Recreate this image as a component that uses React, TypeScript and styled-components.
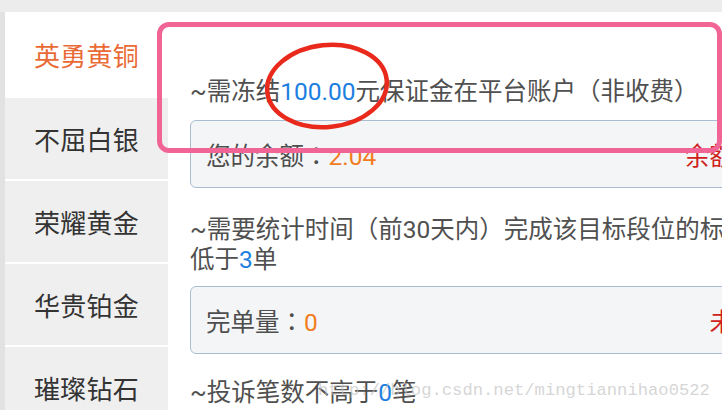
import styled, { createGlobalStyle } from 'styled-components';

type Rank = { name: string };

const ranks: Rank[] = [
  { name: '英勇黄铜' },
  { name: '不屈白银' },
  { name: '荣耀黄金' },
  { name: '华贵铂金' },
  { name: '璀璨钻石' },
];

const GlobalStyle = createGlobalStyle`
  html, body {
    margin: 0;
    padding: 0;
    background: #ffffff;
    overflow: hidden;
  }
  body {
    font-family: Roboto, "Noto Sans CJK SC", sans-serif;
  }
`;

const App = () => {
  const active = 0;

  return (
    <Page>
      <GlobalStyle />
      <TopBand />
      <Main>
        <Sidebar>
          {ranks.map((rank, i) => (
            <RankItem key={rank.name} active={i === active} first={i === 0}>
              {rank.name}
            </RankItem>
          ))}
        </Sidebar>
        <Content>
          <Desc>
            ~需冻结<Blue>100.00</Blue>元保证金在平台账户（非收费）
          </Desc>
          <InfoBox>
            <Label>
              您的余额<Colon>：</Colon>
              <Value>2.04</Value>
            </Label>
            <Status>余额不足</Status>
          </InfoBox>
          <Desc gap={27}>
            ~需要统计时间（前30天内）完成该目标段位的标准单量不
            <br />
            低于<Blue>3</Blue>单
          </Desc>
          <InfoBox tight>
            <Label>
              完单量<Colon>：</Colon>
              <Value>0</Value>
            </Label>
            <Status>未达标</Status>
          </InfoBox>
          <Desc gap={24}>
            ~投诉笔数不高于<Blue>0</Blue>笔
          </Desc>
        </Content>
      </Main>

      {/* hand-drawn annotations over the screenshot */}
      <Highlight />
      <Circle width="130" height="92" viewBox="0 0 130 92">
        <ellipse
          cx="65"
          cy="46"
          rx="60"
          ry="41"
          fill="none"
          stroke="#e8291c"
          strokeWidth="4.5"
          transform="rotate(-6 65 46)"
        />
      </Circle>
      <Watermark>http://blog.csdn.net/mingtiannihao0522</Watermark>
    </Page>
  );
};

const Page = styled.div`
  position: relative;
  width: 722px;
  height: 410px;
  overflow: hidden;
  background: #ffffff;
`;

const TopBand = styled.div`
  height: 12px;
  background: #ececec;
`;

const Main = styled.div`
  display: flex;
  align-items: flex-start;
`;

const Sidebar = styled.div`
  flex: 0 0 163px;
  display: flex;
  flex-direction: column;
  gap: 2px;
  border-left: 5px solid #e2e2e2;
  background: #ffffff;
  height: 398px;
`;

const RankItem = styled.div<{ active?: boolean; first?: boolean }>`
  height: ${({ first }) => (first ? '84px' : '81px')};
  flex: none;
  display: flex;
  align-items: center;
  justify-content: center;
  font-family: "Noto Sans CJK SC", sans-serif;
  font-size: 26px;
  letter-spacing: 0.3px;
  color: ${({ active }) => (active ? '#ea6a35' : '#333333')};
  background: ${({ active }) => (active ? '#ffffff' : '#efefef')};
`;

const Content = styled.div`
  flex: 0 0 auto;
  width: 610px;
  padding: 65px 0 0 22px;
  color: #505050;
`;

const Desc = styled.div<{ gap?: number }>`
  font-size: 24.5px;
  line-height: 30px;
  white-space: nowrap;
  margin-top: ${({ gap }) => gap ?? 0}px;
`;

const Blue = styled.span`
  color: #1c7fe0;
`;

const InfoBox = styled.div<{ tight?: boolean }>`
  box-sizing: border-box;
  height: 68px;
  margin-top: ${({ tight }) => (tight ? '11px' : '13px')};
  padding: 0 16px 0 15px;
  display: flex;
  align-items: center;
  justify-content: space-between;
  background: #f4f5f7;
  border: 1px solid #a9bcd4;
  border-radius: 6px;
  font-size: 24.5px;
`;

const Label = styled.span`
  color: #4e4e4e;
`;

const Colon = styled.span`
  font-family: "Noto Sans CJK TC", sans-serif;
`;

const Value = styled.span`
  color: #f27d1f;
`;

const Status = styled.span`
  color: #d0201a;
`;

const Highlight = styled.div`
  position: absolute;
  left: 157px;
  top: 22px;
  width: 565px;
  height: 131px;
  box-sizing: border-box;
  border: 5.5px solid #f06595;
  border-radius: 12px;
  pointer-events: none;
`;

const Circle = styled.svg`
  position: absolute;
  left: 262px;
  top: 40px;
  pointer-events: none;
`;

const Watermark = styled.div`
  position: absolute;
  left: 318px;
  top: 381px;
  font-family: "Liberation Mono", "DejaVu Sans Mono", monospace;
  font-size: 17.2px;
  line-height: 20px;
  color: rgba(190, 190, 190, 0.65);
  pointer-events: none;
`;

export default App;
